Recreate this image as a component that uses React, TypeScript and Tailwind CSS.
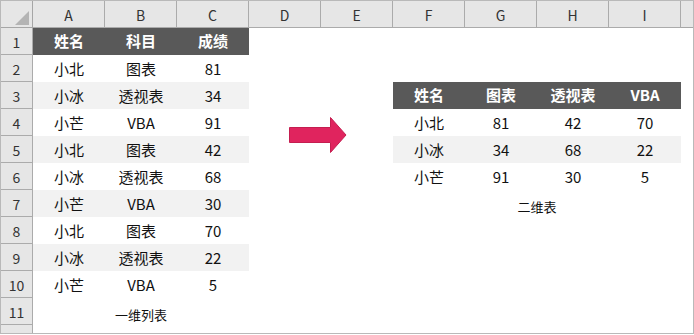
import React from 'react';

const cjk = "font-['Noto_Sans_CJK_SC','Noto_Sans',sans-serif]";

const columns = ['A', 'B', 'C', 'D', 'E', 'F', 'G', 'H', 'I'];

// 一维列表: 姓名 / 科目 / 成绩
const flatRows = [
  ['小北', '图表', '81'],
  ['小冰', '透视表', '34'],
  ['小芒', 'VBA', '91'],
  ['小北', '图表', '42'],
  ['小冰', '透视表', '68'],
  ['小芒', 'VBA', '30'],
  ['小北', '图表', '70'],
  ['小冰', '透视表', '22'],
  ['小芒', 'VBA', '5'],
];

// 二维表: 姓名 x 科目
const pivotRows = [
  ['小北', '81', '42', '70'],
  ['小冰', '34', '68', '22'],
  ['小芒', '91', '30', '5'],
];

const HeadCell: React.FC<{ text: string }> = ({ text }) => (
  <div className="flex items-center justify-center bg-[#595959] text-[15px] font-bold text-white">
    {text}
  </div>
);

const DataCell: React.FC<{ text: string; shaded: boolean }> = ({ text, shaded }) => (
  <div
    className={`flex items-center justify-center pt-[2px] text-[15px] text-[#111] ${
      shaded ? 'bg-[#f2f2f2]' : 'bg-white'
    }`}
  >
    {text}
  </div>
);

const Arrow = () => (
  <svg width="58" height="36" viewBox="0 0 58 36">
    <polygon
      points="0.5,10.5 41.5,10.5 41.5,0.5 57,18 41.5,35.5 41.5,25.5 0.5,25.5"
      fill="#e0245e"
      stroke="#c41e50"
      strokeWidth="1"
    />
  </svg>
);

const CornerCell = () => (
  <div className="flex h-[27px] w-[32px] shrink-0 items-end justify-end border-b border-r border-[#a6a6a6] pb-[2px] pr-[3px]">
    <svg width="14" height="14" viewBox="0 0 14 14">
      <polygon points="14,0 14,14 0,14" fill="#b4b4b4" />
    </svg>
  </div>
);

export default function App() {
  return (
    <div className={`flex h-[334px] w-[694px] flex-col overflow-hidden border border-[#b9b9b9] bg-white ${cjk}`}>
      {/* column letters */}
      <div className="flex bg-[#e6e6e6] text-[14px] text-[#333]">
        <CornerCell />
        {columns.map((c) => (
          <div
            key={c}
            className="flex h-[27px] w-[72px] shrink-0 items-center justify-center border-b border-r border-[#ababab] pt-[2px]"
          >
            {c}
          </div>
        ))}
        <div className="h-[27px] flex-1 border-b border-[#a6a6a6]" />
      </div>

      <div className="flex flex-1">
        {/* row numbers */}
        <div className="flex w-[32px] shrink-0 flex-col bg-[#e6e6e6] text-[14px] text-[#333]">
          {Array.from({ length: 11 }, (_, i) => (
            <div
              key={i}
              className="flex h-[27px] items-center justify-center border-b border-r border-[#ababab] pt-[3px]"
            >
              {i + 1}
            </div>
          ))}
          <div className="flex-1 border-r border-[#ababab]" />
        </div>

        {/* sheet cells */}
        <div className="grid flex-1 grid-cols-[repeat(9,72px)_1fr] grid-rows-[repeat(11,27px)_1fr]">
          <div className="col-span-3 col-start-1 row-span-11 row-start-1 grid grid-cols-3 grid-rows-[repeat(11,27px)]">
            {['姓名', '科目', '成绩'].map((h) => (
              <HeadCell key={h} text={h} />
            ))}
            {flatRows.map((row, r) =>
              row.map((v, c) => <DataCell key={`${r}-${c}`} text={v} shaded={r % 2 === 1} />)
            )}
            <div className="col-span-3 flex items-center justify-center pt-[7px] text-[13px] text-[#111]">
              一维列表
            </div>
          </div>

          <div className="col-span-2 col-start-4 row-span-2 row-start-4 flex items-center justify-center pb-[2px] pr-[7px]">
            <Arrow />
          </div>

          <div className="col-span-4 col-start-6 row-span-5 row-start-3 grid grid-cols-4 grid-rows-[repeat(5,27px)]">
            {['姓名', '图表', '透视表', 'VBA'].map((h) => (
              <HeadCell key={h} text={h} />
            ))}
            {pivotRows.map((row, r) =>
              row.map((v, c) => <DataCell key={`${r}-${c}`} text={v} shaded={r % 2 === 1} />)
            )}
            <div className="col-span-4 flex items-center justify-center pt-[7px] text-[13px] text-[#111]">
              二维表
            </div>
          </div>
        </div>
      </div>
    </div>
  );
}
